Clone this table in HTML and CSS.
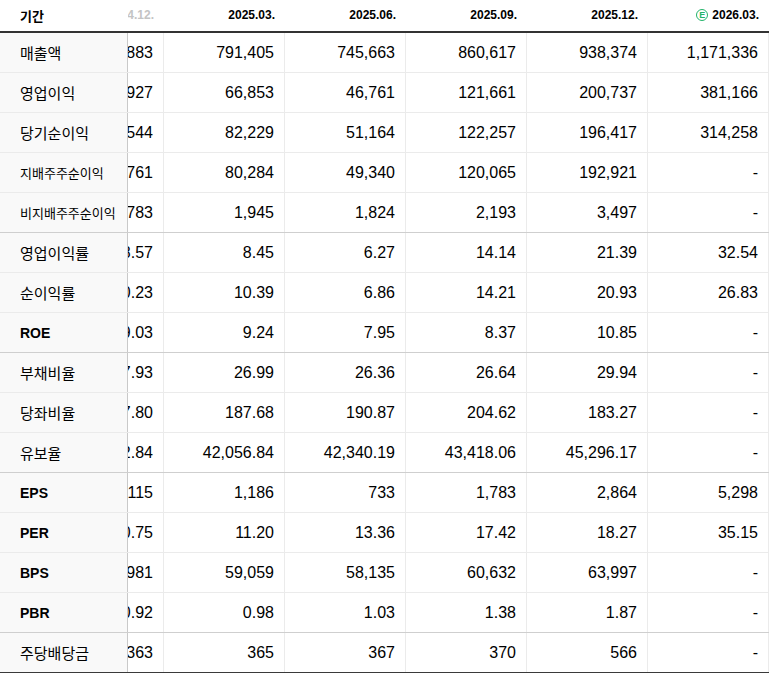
FILE: index.html
```html
<!DOCTYPE html>
<html lang="ko">
<head>
<meta charset="utf-8">
<link rel="stylesheet" href="styles.css">
</head>
<body>
<div class="sheet">
  <div class="row head">
    <div class="lab">기간</div>
    <div class="cell part fade"><span>2024.12.</span></div>
    <div class="cell">2025.03.</div>
    <div class="cell">2025.06.</div>
    <div class="cell">2025.09.</div>
    <div class="cell">2025.12.</div>
    <div class="cell"><span class="est">E</span>2026.03.</div>
  </div>
  <div class="row">
    <div class="lab">매출액</div>
    <div class="cell part"><span>757,883</span></div>
    <div class="cell">791,405</div><div class="cell">745,663</div><div class="cell">860,617</div><div class="cell">938,374</div><div class="cell">1,171,336</div>
  </div>
  <div class="row">
    <div class="lab">영업이익</div>
    <div class="cell part"><span>64,927</span></div>
    <div class="cell">66,853</div><div class="cell">46,761</div><div class="cell">121,661</div><div class="cell">200,737</div><div class="cell">381,166</div>
  </div>
  <div class="row">
    <div class="lab">당기순이익</div>
    <div class="cell part"><span>77,544</span></div>
    <div class="cell">82,229</div><div class="cell">51,164</div><div class="cell">122,257</div><div class="cell">196,417</div><div class="cell">314,258</div>
  </div>
  <div class="row">
    <div class="lab small">지배주주순이익</div>
    <div class="cell part"><span>75,761</span></div>
    <div class="cell">80,284</div><div class="cell">49,340</div><div class="cell">120,065</div><div class="cell">192,921</div><div class="cell">-</div>
  </div>
  <div class="row group">
    <div class="lab small">비지배주주순이익</div>
    <div class="cell part"><span>1,783</span></div>
    <div class="cell">1,945</div><div class="cell">1,824</div><div class="cell">2,193</div><div class="cell">3,497</div><div class="cell">-</div>
  </div>
  <div class="row">
    <div class="lab">영업이익률</div>
    <div class="cell part"><span>8.57</span></div>
    <div class="cell">8.45</div><div class="cell">6.27</div><div class="cell">14.14</div><div class="cell">21.39</div><div class="cell">32.54</div>
  </div>
  <div class="row">
    <div class="lab">순이익률</div>
    <div class="cell part"><span>10.23</span></div>
    <div class="cell">10.39</div><div class="cell">6.86</div><div class="cell">14.21</div><div class="cell">20.93</div><div class="cell">26.83</div>
  </div>
  <div class="row group">
    <div class="lab en">ROE</div>
    <div class="cell part"><span>9.03</span></div>
    <div class="cell">9.24</div><div class="cell">7.95</div><div class="cell">8.37</div><div class="cell">10.85</div><div class="cell">-</div>
  </div>
  <div class="row">
    <div class="lab">부채비율</div>
    <div class="cell part"><span>27.93</span></div>
    <div class="cell">26.99</div><div class="cell">26.36</div><div class="cell">26.64</div><div class="cell">29.94</div><div class="cell">-</div>
  </div>
  <div class="row">
    <div class="lab">당좌비율</div>
    <div class="cell part"><span>187.80</span></div>
    <div class="cell">187.68</div><div class="cell">190.87</div><div class="cell">204.62</div><div class="cell">183.27</div><div class="cell">-</div>
  </div>
  <div class="row group">
    <div class="lab">유보율</div>
    <div class="cell part"><span>41,782.84</span></div>
    <div class="cell">42,056.84</div><div class="cell">42,340.19</div><div class="cell">43,418.06</div><div class="cell">45,296.17</div><div class="cell">-</div>
  </div>
  <div class="row">
    <div class="lab en">EPS</div>
    <div class="cell part"><span>1,115</span></div>
    <div class="cell">1,186</div><div class="cell">733</div><div class="cell">1,783</div><div class="cell">2,864</div><div class="cell">5,298</div>
  </div>
  <div class="row">
    <div class="lab en">PER</div>
    <div class="cell part"><span>10.75</span></div>
    <div class="cell">11.20</div><div class="cell">13.36</div><div class="cell">17.42</div><div class="cell">18.27</div><div class="cell">35.15</div>
  </div>
  <div class="row">
    <div class="lab en">BPS</div>
    <div class="cell part"><span>57,981</span></div>
    <div class="cell">59,059</div><div class="cell">58,135</div><div class="cell">60,632</div><div class="cell">63,997</div><div class="cell">-</div>
  </div>
  <div class="row group">
    <div class="lab en">PBR</div>
    <div class="cell part"><span>0.92</span></div>
    <div class="cell">0.98</div><div class="cell">1.03</div><div class="cell">1.38</div><div class="cell">1.87</div><div class="cell">-</div>
  </div>
  <div class="row last">
    <div class="lab">주당배당금</div>
    <div class="cell part"><span>363</span></div>
    <div class="cell">365</div><div class="cell">367</div><div class="cell">370</div><div class="cell">566</div><div class="cell">-</div>
  </div>
</div>
</body>
</html>
```

FILE: styles.css
```css
html, body {
  margin: 0;
  padding: 0;
  background: #fff;
}
body {
  font-family: "Liberation Sans", Arial, "Noto Sans CJK KR", sans-serif;
  color: #000;
}
.sheet {
  width: 769px;
}
.row {
  display: grid;
  grid-template-columns: 128px 36px repeat(5, 121px);
  height: 40px;
  box-sizing: border-box;
  border-bottom: 1px solid #ebebeb;
}
.row.group {
  border-bottom-color: #cfcfcf;
}
.row.last {
  border-bottom-color: #3a3a3a;
}
.row.head {
  height: 33px;
  border-bottom: 2px solid #333;
}
.lab {
  display: flex;
  align-items: center;
  padding-left: 20px;
  background: #f9f9f9;
  border-right: 1px solid #c9c9c9;
  font-family: "Noto Sans CJK KR", "Liberation Sans", sans-serif;
  font-size: 15px;
  color: #000;
  white-space: nowrap;
  overflow: hidden;
}
.lab.small {
  font-size: 13px;
}
.lab.en {
  font-family: "Liberation Sans", Arial, sans-serif;
  font-weight: bold;
  font-size: 14px;
}
.cell {
  display: flex;
  align-items: center;
  justify-content: flex-end;
  padding-right: 10px;
  border-right: 1px solid #ebebeb;
  font-size: 16px;
  color: #000;
  white-space: nowrap;
  overflow: hidden;
}
.cell.part span {
  flex: none;
}
.head .lab {
  background: #fff;
  border-right: none;
  font-weight: bold;
  font-size: 13px;
  padding-bottom: 1px;
}
.head .cell {
  border-right: none;
  font-weight: bold;
  font-size: 12px;
  padding-bottom: 1px;
}
.head .cell.fade {
  color: #c4c4c4;
}
.est {
  display: inline-flex;
  align-items: center;
  justify-content: center;
  width: 10px;
  height: 10px;
  border: 1.2px solid #22b36a;
  border-radius: 50%;
  color: #22b36a;
  font-size: 9px;
  font-weight: bold;
  margin-right: 4px;
  line-height: 1;
}
```
